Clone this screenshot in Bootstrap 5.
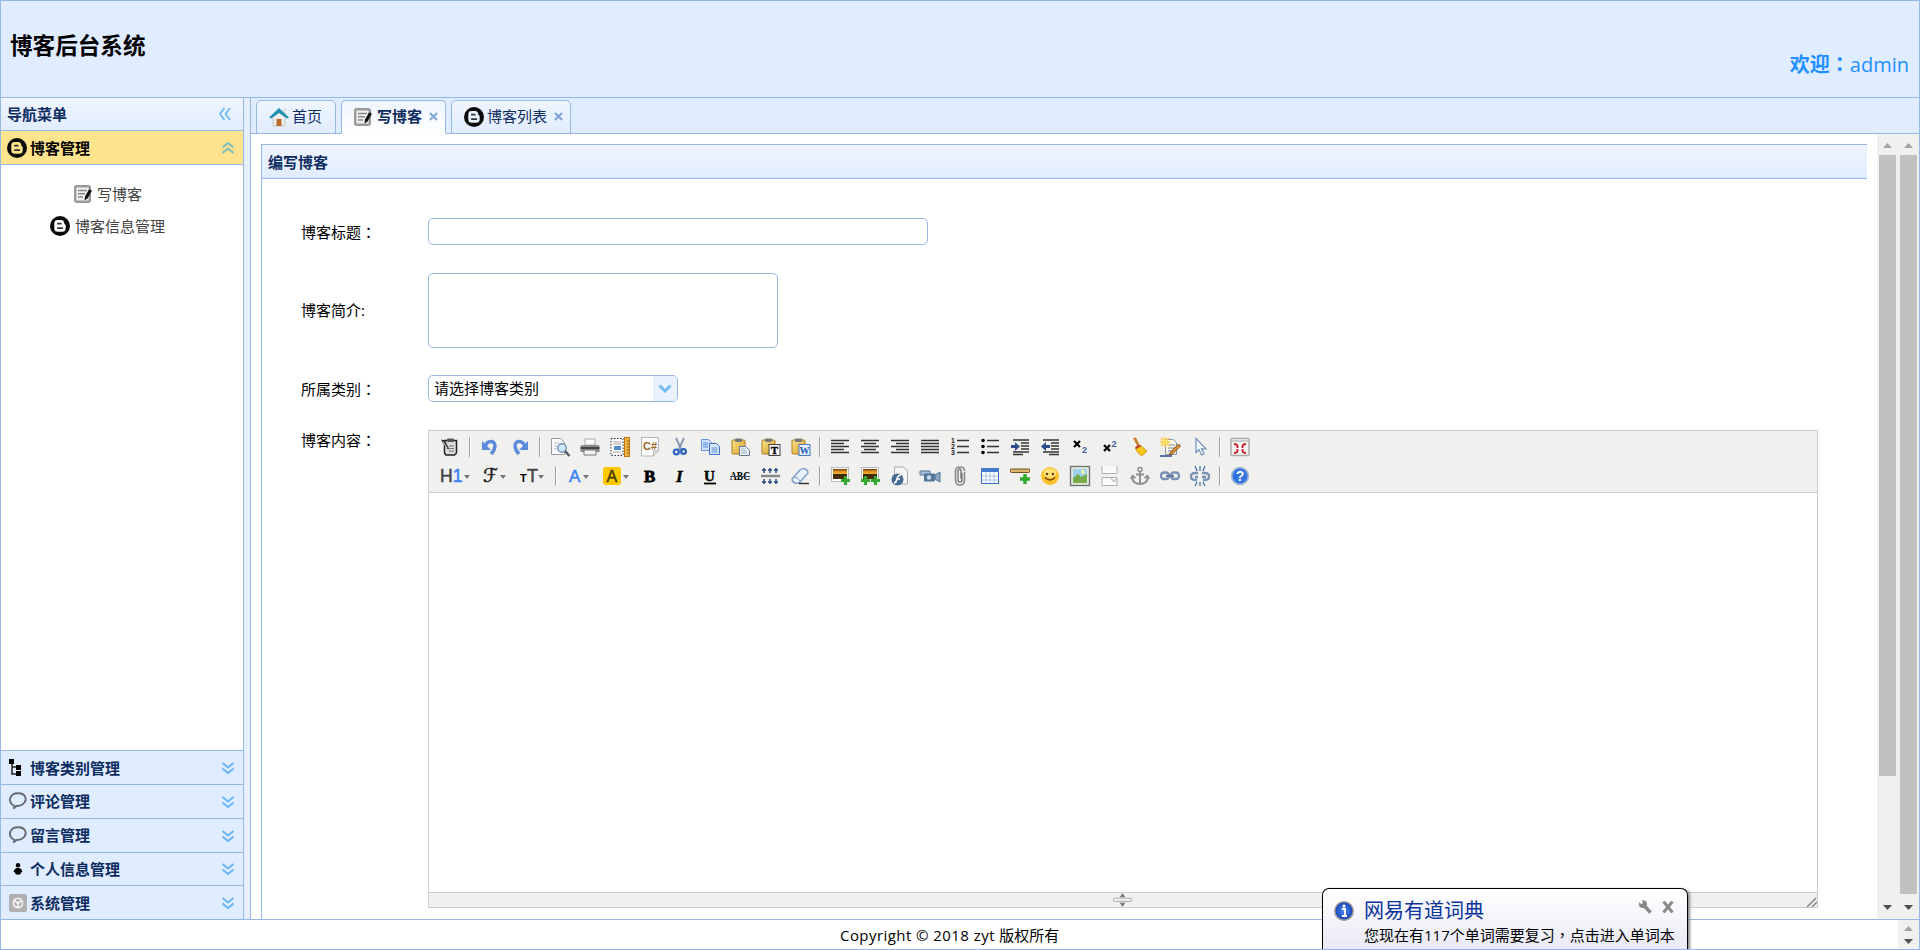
<!DOCTYPE html>
<html lang="zh-CN">
<head>
<meta charset="utf-8">
<title>博客后台系统</title>
<link rel="stylesheet" href="https://cdn.jsdelivr.net/npm/bootstrap@5.3.0/dist/css/bootstrap.min.css">
<style>
:root{--line:#95b8e7;--panel:#e0ecff;--ink:#0e2d5f}
body{height:950px;font:15px/20px "Open Sans","Noto Sans CJK SC",sans-serif;color:#000;border:1px solid var(--line)}
.cjk{font-family:"Noto Sans CJK SC",sans-serif}
.mid{font-family:"Noto Sans CJK TC",sans-serif}
svg{display:block;flex:none}
.top-bar{height:97px;background:var(--panel);border-bottom:1px solid var(--line);padding-left:9px}
.top-bar h1{font:700 22.6px/30px "Noto Sans CJK SC",sans-serif;padding-top:29px}
.welcome{font-size:20px;line-height:26px;color:#1e90ff;padding:50px 10px 0 0}
.main-row{height:821px}
.side{width:243px;border-right:1px solid var(--line)}
.split{width:6px;background:#e6eefb}
.grad{background:linear-gradient(#eff5ff,#e0ecff)}
.side-item{height:34px;border-top:1px solid var(--line);background:var(--panel);color:var(--ink);font-weight:700;padding:0 8px 0 6px}
.side-item .cap{flex:1;margin-left:3px}
.side-item.raise .cap{padding-bottom:2px}
.side-head{height:32px;color:var(--ink);font-weight:700;padding:0 11px 0 6px}
.side-item.on{background:#ffe48d;color:#000;height:35px;border-bottom:1px solid var(--line);border-top:1px solid var(--line)}
.side-links{color:#444;padding-top:13px}
.work{border-left:1px solid var(--line)}
.tab-strip{height:36px;background:var(--panel);border-bottom:1px solid var(--line);padding:2px 0 0 5px;gap:5px}
.tab-one{height:34px;border:1px solid var(--line);border-radius:5px 5px 0 0;color:var(--ink);background:linear-gradient(#eff5ff,#e0ecff);padding-left:12px}
.tab-one span{padding-bottom:2px}
.tab-one.on{background:linear-gradient(#eff5ff,#fff);border-bottom-color:#fff;font-weight:700}
.editor-panel{width:1606px;margin:10px 0 0 10px;border-left:1px solid var(--line);border-top:1px solid var(--line)}
.panel-cap{height:34px;border-bottom:1px solid var(--line);color:var(--ink);font-weight:700;padding-left:6px}
.lab{width:127px;flex:none}
.box{border:1px solid var(--line);border-radius:5px;background:#fff}
.blog-form{padding:39px 0 0 39px}
.rich{width:1390px;height:478px;border:1px solid #ccc}
.tools{height:62px;background:#f0f0ee;border-bottom:1px solid #ccc;padding:1px 0 0 6px}
.tools>div{height:29px;align-items:center}
.tools svg{width:18px;height:18px;margin:0 6px;overflow:visible}
.tools i{width:10px;height:20px;flex:none;display:block;background:linear-gradient(90deg,transparent 4px,#a0a0a0 4px,#a0a0a0 5px,#fff 5px,#fff 6px,transparent 6px)}
.tools svg.w40{width:28px}
.tools svg text{font-family:"Liberation Sans",sans-serif}
.grip{height:15px;background:#f0f0ee;border-top:1px solid #ccc}
.sb{width:21px;background:#f0f0f0}
.sb b{display:block;width:17px;background:#c1c1c1;margin-left:2px}
.foot{height:30px;border-top:1px solid var(--line)}
.latin{letter-spacing:.44px}
.toast-pop{position:absolute;left:1321px;top:887px;width:366px;height:62px;border:1.5px solid #000;border-bottom:0;border-radius:7px 7px 0 0;background:linear-gradient(#fff,#e9e9f5);box-shadow:2px 1px 3px #888;padding:9px 8px 0 11px}
.toast-pop .hd{font-size:20px;line-height:26px;color:#0a3399}
</style>
</head>
<body class="d-flex flex-column overflow-hidden position-relative">
<svg width="0" height="0" class="position-absolute">
<defs>
<linearGradient id="gy" x2="1" y2="1"><stop stop-color="#fbe68a"/><stop offset="1" stop-color="#d49a28"/></linearGradient>
<linearGradient id="gs" x2="0" y2="1"><stop stop-color="#5b3412"/><stop offset=".2" stop-color="#d98a1c"/><stop offset=".5" stop-color="#f8b02c"/><stop offset=".55" stop-color="#3b2408"/><stop offset="1" stop-color="#4b340c"/></linearGradient>
<radialGradient id="gb"><stop stop-color="#4f8bf5"/><stop offset="1" stop-color="#1742b5"/></radialGradient>
<symbol id="blogger" viewBox="0 0 20 20"><circle cx="10" cy="10" r="10" fill="#0a0a0a"/><path d="M4.300 7.500A3.400 3.400 0 0 1 7.700 4.100H11A3.400 3.400 0 0 1 14.300 7.500Q14.300 8.500 15.700 8.700V12.300A3.500 3.500 0 0 1 12.200 15.800H7.800A3.500 3.500 0 0 1 4.300 12.300Z" fill="currentColor"/><path d="M7.800 7.700h3M7.800 12.100h4.600" stroke="#333" stroke-width="1.700" stroke-linecap="round"/></symbol>
<symbol id="note" viewBox="0 0 18 18"><rect x="1.200" y="1.200" width="14.600" height="15.600" rx="1.500" fill="#f0f0f0" stroke="#9a9a9a" stroke-width="2.400"/><path d="M4 5.500h9M4 8.800h7M4 12h5" stroke="#888" stroke-width="1.500"/><path d="M17.500 5l-2.500-.5-4 7-.5 4 3-2 4-7z" fill="#111"/></symbol>
<symbol id="dbl" viewBox="0 0 14 12"><path d="M1.500 1l5.500 4.500L12.500 1M1.500 6.500L7 11l5.500-4.500" fill="none" stroke="currentColor" stroke-width="2.100"/></symbol>
<symbol id="bub" viewBox="0 0 18 18"><path d="M5.500 14C-2 10 .500 1.200 9 1.200S19 9 13 12.700C10.500 14.200 8 14 7.500 14L4.500 16.500Z" fill="none" stroke="#666b75" stroke-width="1.900"/></symbol>
<symbol id="plus" viewBox="0 0 8 8"><path d="M4 0v8M0 4h8" stroke="#35a82f" stroke-width="2.800"/></symbol>
<symbol id="board" viewBox="0 0 18 18"><rect x="1" y="2" width="13" height="14" rx="1" fill="url(#gy)" stroke="#ad7a20"/><rect x="4" y=".5" width="7" height="3.500" rx="1" fill="#777"/></symbol>
<symbol id="pic" viewBox="0 0 18 16"><rect x=".5" y=".5" width="17" height="14" fill="#fff" stroke="#bbb"/><rect x="2" y="2" width="14" height="10" fill="url(#gs)"/></symbol>
<symbol id="up" viewBox="0 0 9 5"><path d="M0 5L4.500 0L9 5Z" fill="currentColor"/></symbol>
</defs></svg>

<header class="top-bar d-flex justify-content-between">
<h1 class="m-0">博客后台系统</h1>
<div class="welcome"><span class="cjk fw-bold">欢迎<span class="mid" lang="zh-TW">：</span></span>admin</div>
</header>

<div class="main-row d-flex">
<aside class="side d-flex flex-column">
<div class="side-head grad d-flex align-items-center justify-content-between"><span>导航菜单</span>
<svg width="14" height="14" viewBox="0 0 14 14"><path d="M6.500 1L2 7l4.500 6M12 1L7.500 7l4.500 6" fill="none" stroke="#74bdf2" stroke-width="1.900"/></svg></div>
<div class="side-item on d-flex align-items-center"><svg width="20" height="20" color="#ffe48d"><use href="#blogger"/></svg><span class="cap">博客管理</span><svg width="14" height="12" color="#7fbcb8" style="transform:scaleY(-1)"><use href="#dbl"/></svg></div>
<div class="side-links flex-grow-1">
<div class="d-flex align-items-center" style="padding:6px 0 6px 73px"><svg width="18" height="18"><use href="#note"/></svg><span style="margin-left:5px">写博客</span></div>
<div class="d-flex align-items-center" style="padding:6px 0 0 49px"><svg width="20" height="20" color="#fff"><use href="#blogger"/></svg><span style="margin-left:5px">博客信息管理</span></div>
</div>
<div class="side-item d-flex align-items-center"><svg width="20" height="20" viewBox="0 0 20 20"><path d="M5 4v12h6M5 9h6" fill="none" stroke="#222" stroke-width="1.500"/><path d="M2 1h5v5H2zM9 7h5v5H9zM9 13h5v5H9z" fill="#000"/></svg><span class="cap">博客类别管理</span><svg width="14" height="12" color="#6db7f3"><use href="#dbl"/></svg></div>
<div class="side-item raise d-flex align-items-center"><svg width="20" height="20" viewBox="-2 0 20 20"><use href="#bub" width="18" height="18"/></svg><span class="cap">评论管理</span><svg width="14" height="12" color="#6db7f3"><use href="#dbl"/></svg></div>
<div class="side-item raise d-flex align-items-center"><svg width="20" height="20" viewBox="-2 0 20 20"><use href="#bub" width="18" height="18"/></svg><span class="cap">留言管理</span><svg width="14" height="12" color="#6db7f3"><use href="#dbl"/></svg></div>
<div class="side-item d-flex align-items-center" style="height:33px"><svg width="20" height="20" viewBox="0 0 20 20"><circle cx="11" cy="6.200" r="2.200"/><path d="M9.500 9h3q2.500 1 3 3.800l-2 1.200v1.500H8.500V14l-2-1.200Q7 10 9.500 9z"/></svg><span class="cap">个人信息管理</span><svg width="14" height="12" color="#6db7f3"><use href="#dbl"/></svg></div>
<div class="side-item d-flex align-items-center"><svg width="20" height="20" viewBox="0 0 20 20"><rect x="2" y="1" width="18" height="18" rx="2" fill="#b0b0b0"/><circle cx="11" cy="10" r="5.500" fill="#ececec"/><circle cx="11" cy="10" r="2.800" fill="none" stroke="#a3a3a3" stroke-width="1.800" stroke-dasharray="3.500 2"/></svg><span class="cap">系统管理</span><svg width="14" height="12" color="#6db7f3"><use href="#dbl"/></svg></div>
</aside>
<div class="split"></div>

<main class="work flex-grow-1 d-flex flex-column">
<div class="tab-strip d-flex">
<div class="tab-one d-flex align-items-center" style="width:80px"><svg width="20" height="20" viewBox="0 0 20 20"><path d="M14 2h3v7h-3z" fill="#e8e8e8" stroke="#ccc" stroke-width=".5"/><path d="M4 10l6-5 6 5v9H4z" fill="#eee" stroke="#c5c5c5"/><path d="M7.500 12h5v7h-5z" fill="#b76a2d"/><path d="M0 10.500L10 1l10 9.500-2 1-8-5.500-8 5.500z" fill="#2292ae"/></svg><span style="margin-left:3px">首页</span></div>
<div class="tab-one on d-flex align-items-center" style="width:105px"><svg width="18" height="18"><use href="#note"/></svg><span style="margin-left:5px">写博客</span><svg width="9" height="9" viewBox="0 0 9 9" style="margin:0 0 2px 7px"><path d="M1 1l7 7M8 1L1 8" stroke="#82a5d8" stroke-width="2"/></svg></div>
<div class="tab-one d-flex align-items-center" style="width:120px"><svg width="20" height="20" color="#e8f1ff"><use href="#blogger"/></svg><span style="margin-left:3px">博客列表</span><svg width="9" height="9" viewBox="0 0 9 9" style="margin:0 0 2px 7px"><path d="M1 1l7 7M8 1L1 8" stroke="#82a5d8" stroke-width="2"/></svg></div>
</div>
<div class="d-flex flex-grow-1 justify-content-between">
<section class="editor-panel d-flex flex-column">
<div class="panel-cap grad d-flex align-items-center">编写博客</div>
<div class="blog-form">
<div class="d-flex align-items-center" style="height:27px"><span class="lab">博客标题<span class="mid" lang="zh-TW">：</span></span><div class="box" style="width:500px;height:27px"></div></div>
<div class="d-flex align-items-center" style="margin-top:28px"><span class="lab" style="padding-bottom:2px">博客简介:</span><div class="box" style="width:350px;height:75px"></div></div>
<div class="d-flex align-items-center" style="margin-top:27px"><span class="lab">所属类别<span class="mid" lang="zh-TW">：</span></span><div class="box d-flex align-items-center justify-content-between overflow-hidden" style="width:250px;height:27px;padding-left:5px"><span style="padding-bottom:2px">请选择博客类别</span><span class="h-100 d-flex align-items-center" style="width:24px;background:#e9f1ff;padding-left:5px"><svg width="14" height="9" viewBox="0 0 14 9"><path d="M1.500 1.500L7 7l5.500-5.500" fill="none" stroke="#72bcf0" stroke-width="3"/></svg></span></div></div>
<div class="d-flex" style="margin-top:28px"><span class="lab">博客内容<span class="mid" lang="zh-TW">：</span></span>
<div class="rich d-flex flex-column">
<div class="tools">
<div class="d-flex">
<svg viewBox="0 0 18 18"><path d="M3.500 2.500h12v12.500l-2 2H5L3.500 15z" fill="#ddd" stroke="#222" stroke-width="1.500"/><rect x="6" y=".5" width="7" height="3.500" rx="1" fill="#555"/><path d="M8 8h5M8 10.500h5M8 13h5" stroke="#777"/><path d="M0 1.500l4 1 4 8-1 1-5-6z" fill="#333"/><path d="M2 4l4 6" stroke="#ddd"/></svg><i></i>
<svg viewBox="0 0 18 18"><path d="M4.500 8C6 2 14 2 14 7.500Q14 12 10 16" fill="none" stroke="#5c8bdc" stroke-width="3.400"/><path d="M1 3v9H10z" fill="#5c8bdc"/></svg>
<svg viewBox="0 0 18 18"><path d="M13.500 8C12 2 4 2 4 7.500Q4 12 8 16" fill="none" stroke="#5c8bdc" stroke-width="3.400"/><path d="M17 3v9H8z" fill="#5c8bdc"/></svg><i></i>
<svg viewBox="0 0 18 18"><path d="M.500.500h9l4 4v12H.500z" fill="#f8fbff" stroke="#999"/><path d="M3 5h5M3 8h4M3 11h3" stroke="#bbb"/><circle cx="11" cy="10" r="4.200" fill="#cfe6fa" stroke="#7b95b5" stroke-width="1.400"/><path d="M14 13l4.500 5" stroke="#55606e" stroke-width="2.600"/></svg>
<svg viewBox="0 0 18 18"><path d="M4 1h10v6H4z" fill="#fff" stroke="#aaa"/><path d="M1 7h16q1.500 0 1.500 2v5h-19V9q0-2 1.500-2z" fill="#8b8b8b"/><path d="M-.5 10h19" stroke="#333" stroke-width="1.600"/><path d="M3 12h12v5H3z" fill="#f4f4f4" stroke="#777"/></svg>
<svg viewBox="0 0 18 18"><rect x="0" y=".5" width="12" height="17" fill="#fff" stroke="#333" stroke-dasharray="1.500 1.500"/><path d="M2 4h8M2 6h8M2 14h8" stroke="#aaa"/><path d="M3 8h7v4H3z" fill="#4e8cce"/><rect x="13.500" y="-.5" width="5" height="19" fill="#f1b53c" stroke="#b87719"/><path d="M16 3h2M16 6h2M16 9h2M16 12h2M16 15h2" stroke="#8a5515"/></svg>
<svg viewBox="0 0 18 18"><path d="M.500-.500h17v13.500l-5 5H.500z" fill="#fbfbfb" stroke="#b5b5b5"/><path d="M12.500 18v-5h5" fill="#ddd" stroke="#b5b5b5"/><text x="2" y="11.500" font-size="10.500" font-weight="700" fill="#9a6528" textLength="14" lengthAdjust="spacingAndGlyphs">C#</text></svg>
<svg viewBox="0 0 18 18"><path d="M5 0l6 13M13 0L7 13" stroke="#8a9bb2" stroke-width="2"/><circle cx="5.300" cy="14" r="2.500" fill="none" stroke="#2c63bc" stroke-width="2.200"/><circle cx="12.500" cy="13.500" r="2.400" fill="none" stroke="#2c63bc" stroke-width="2.200"/></svg>
<svg viewBox="0 0 18 18"><path d="M.500 1.500h7l3 3v8H.500z" fill="#cfe2ff" stroke="#6a94da"/><path d="M8.500 5.500h7l3 3v8h-10z" fill="#d8e8ff" stroke="#3f70c9"/><path d="M10.500 10h6M10.500 12h6M10.500 14h6M2 5h5M2 7h5M2 9h5" stroke="#5f8ede"/></svg>
<svg viewBox="0 0 18 18"><use href="#board" width="18" height="18"/><path d="M8.500 8.500h6l4 4v5h-10z" fill="#eef3fb" stroke="#64748e"/><path d="M10 11h4M10 13h6M10 15h6" stroke="#a3aec0"/></svg>
<svg viewBox="0 0 18 18"><use href="#board" width="18" height="18"/><rect x="8" y="6.500" width="11" height="11" fill="#f6f6f6" stroke="#444"/><text x="10" y="15.800" font-size="10.500" font-weight="700" stroke="#000" stroke-width=".4" style="font-family:'Liberation Serif'">T</text></svg>
<svg viewBox="0 0 18 18"><use href="#board" width="18" height="18"/><rect x="8" y="6.500" width="11" height="11" fill="#e8f1ff" stroke="#4776bc"/><text x="8.500" y="15.500" font-size="10" font-weight="700" fill="#2458b2" style="font-family:'Liberation Serif'">W</text></svg><i></i>
<svg viewBox="0 0 18 18"><path d="M0 2.500h18M0 5.500h13M0 8.500h18M0 11.500h13M0 14.500h18" stroke="#333" stroke-width="1.700"/></svg>
<svg viewBox="0 0 18 18"><path d="M0 2.500h18M3 5.500h12M0 8.500h18M3 11.500h12M0 14.500h18" stroke="#333" stroke-width="1.700"/></svg>
<svg viewBox="0 0 18 18"><path d="M0 2.500h18M5 5.500h13M0 8.500h18M5 11.500h13M0 14.500h18" stroke="#333" stroke-width="1.700"/></svg>
<svg viewBox="0 0 18 18"><path d="M0 2.500h18M0 5.500h18M0 8.500h18M0 11.500h18M0 14.500h18" stroke="#333" stroke-width="1.700"/></svg>
<svg viewBox="0 0 18 18"><path d="M6 2.500h12M6 8.500h12M6 14.500h12" stroke="#333" stroke-width="1.300"/><g font-size="7" font-weight="700" fill="#222"><text x="0" y="5">1</text><text x="0" y="11">2</text><text x="0" y="17">3</text></g></svg>
<svg viewBox="0 0 18 18"><path d="M6 2.500h12M6 8.500h12M6 14.500h12" stroke="#333" stroke-width="1.300"/><circle cx="2" cy="2.500" r="1.800"/><circle cx="2" cy="8.500" r="1.800"/><circle cx="2" cy="14.500" r="1.800"/></svg>
<svg viewBox="0 0 18 18"><path d="M2 2h16M10 5h8M10 8h8M10 11h8M2 14h16M2 16.500h10" stroke="#333" stroke-width="1.500"/><path d="M0 7h4V4l5 4.500L4 13v-3H0z" fill="#2c4f8c"/></svg>
<svg viewBox="0 0 18 18"><path d="M2 2h16M10 5h8M10 8h8M10 11h8M2 14h16M8 16.500h10" stroke="#333" stroke-width="1.500"/><path d="M9 7H5V4L0 8.500 5 13v-3h4z" fill="#2c4f8c"/></svg>
<svg viewBox="0 0 18 18"><path d="M3 3l6 6M9 3L3 9" stroke="#000" stroke-width="2.200"/><text x="11" y="15" font-size="9" font-weight="700" fill="#3b5fa5">2</text></svg>
<svg viewBox="0 0 18 18"><path d="M3 7l6 6M9 7l-6 6" stroke="#000" stroke-width="2.200"/><text x="10.500" y="9" font-size="9" font-weight="700" fill="#3b5fa5">2</text></svg>
<svg viewBox="0 0 18 18"><path d="M2 0l3-.5L9 8l-2 1.500z" fill="#c8832a"/><path d="M4.500 10l5-2.500L16 13l-4.500 4.500Q7 17 4.500 10z" fill="#f3c619" stroke="#d19e12"/><path d="M4.500 10l5-2.500" stroke="#c73b26" stroke-width="2"/></svg>
<svg viewBox="0 0 18 18"><path d="M4.500 1.500h8l3 3v12h-11z" fill="#f9f3e3" stroke="#8697b2"/><path d="M7 7h7M7 10h6M7 13h5" stroke="#7f8ca5"/><path d="M17.500 6l2 2-8 8-3 1 1-3z" fill="#d98f37" stroke="#895017"/><path d="M4-1v10M-1 4h10M0 0l8 8M8 0L0 8" stroke="#ffc93a" stroke-width="1.500"/><circle cx="4" cy="4" r="2.500" fill="#ffe066"/><path d="M-1 18h12" stroke="#23498b" stroke-width="1.500"/></svg>
<svg viewBox="0 0 18 18"><path d="M5 .5v14l3-3 2.500 5.500 2.500-1.200-2.500-5h4.500z" fill="#f5f9ff" stroke="#718fb9" stroke-width="1.200"/></svg><i></i>
<svg viewBox="0 0 18 18"><rect x="0" y=".5" width="18" height="17" rx="1" fill="#f6f6f6" stroke="#aaa" stroke-width="1.500"/><path d="M1 3h16" stroke="#ccc" stroke-width="2"/><path d="M3 6q4 0 3.500 4M15 6q-4 0-3.500 4M3 15q4 0 3.500-4M15 15q-4 0-3.500-4" fill="none" stroke="#c8202f" stroke-width="1.900"/></svg>
</div>
<div class="d-flex">
<svg class="w40" viewBox="0 0 28 18"><text x="-1" y="14.500" font-size="17.500" fill="#444" stroke="#444" stroke-width=".5">H<tspan fill="#3b82f6" stroke="#3b82f6">1</tspan></text><path d="M23 8h6l-3 4z" fill="#777"/></svg>
<svg style="width:25px;margin-left:8px" viewBox="0 0 25 18"><text x="0" y="14.500" font-size="19" stroke="#333" stroke-width=".5" style="font-family:'DejaVu Serif','DejaVu Sans'">ℱ</text><path d="M17 8h6l-3 4z" fill="#777"/></svg>
<svg style="width:25px" viewBox="0 0 25 18"><text x="0" y="15" font-size="11" font-weight="700">T</text><text x="7" y="15" font-size="18" fill="#444" stroke="#444" stroke-width=".5">T</text><path d="M18 8h6l-3 4z" fill="#777"/></svg><i></i>
<svg style="width:22px;margin-left:8px" viewBox="0 0 22 18"><text x="0" y="15" font-size="17" fill="#3b82f6" stroke="#3b82f6" stroke-width=".5">A</text><path d="M14 8h6l-3 4z" fill="#777"/></svg>
<svg style="width:27px;margin-right:5px" viewBox="0 0 27 18"><rect x="0" y="0" width="18" height="18" rx="3" fill="#ffc700"/><text x="3.500" y="14.500" font-size="16" fill="#4b3a00" stroke="#4b3a00" stroke-width=".5">A</text><path d="M20 8h6l-3 4z" fill="#777"/></svg>
<svg viewBox="0 0 18 18"><text x="3" y="14.500" font-size="17" font-weight="700" stroke="#000" stroke-width=".8" style="font-family:'Liberation Serif'">B</text></svg>
<svg viewBox="0 0 18 18"><text x="5" y="14.500" font-size="17" font-weight="700" font-style="italic" stroke="#000" stroke-width=".5" style="font-family:'Liberation Serif'">I</text></svg>
<svg viewBox="0 0 18 18"><text x="3" y="13.500" font-size="15" font-weight="700" stroke="#000" stroke-width=".5" style="font-family:'Liberation Serif'">U</text><path d="M3 16.500h12" stroke="#000" stroke-width="1.800"/></svg>
<svg viewBox="0 0 18 18"><text x="-1" y="13" font-size="11.500" font-weight="700" textLength="20" lengthAdjust="spacingAndGlyphs" style="font-family:'Liberation Serif'">ABC</text><path d="M-1 9.500h20" stroke="#2c4a72"/></svg>
<svg viewBox="0 0 18 18"><path d="M0 9h19" stroke="#888" stroke-width="2.500"/><path d="M3 1v5M9 1v5M15 1v5M3 12v5M9 12v5M15 12v5M1 3h4M7 3h4M13 3h4M1 15h4M7 15h4M13 15h4" stroke="#2d4a7d" stroke-width="1.500"/></svg>
<svg viewBox="0 0 18 18"><path d="M1 12l8-9q2-2 5-1t3 4l-8 9q-2 2-5 1t-3-4z" fill="#e9f1fb" stroke="#7d9dc8" stroke-width="1.400"/><path d="M3 10q4 0 6 4" fill="none" stroke="#7d9dc8"/><path d="M8 16.500h10" stroke="#333" stroke-width="1.400"/></svg><i></i>
<svg viewBox="0 0 18 18"><use href="#pic" width="18" height="16"/><use href="#plus" x="10" y="9" width="9" height="9"/></svg>
<svg viewBox="0 0 18 18"><use href="#pic" width="18" height="16"/><use href="#plus" x="0" y="9" width="9" height="9"/><use href="#plus" x="10" y="9" width="9" height="9"/></svg>
<svg viewBox="0 0 18 18"><path d="M3.500 0h9l4 4v13h-13z" fill="#f7f7f7" stroke="#aaa"/><circle cx="6.500" cy="12.500" r="6" fill="#466a91"/><path d="M10 8q-3 0-4 4t-3 4M5 12h4" fill="none" stroke="#fff" stroke-width="1.600"/></svg>
<svg viewBox="0 0 18 18"><path d="M-1 4h10v4H-1z" fill="#a4bede" stroke="#55769b"/><rect x="3" y="6.500" width="11" height="8" rx="1" fill="#55769b"/><path d="M14 8l5-3v10l-5-3z" fill="#8aa5c6" stroke="#55769b"/><circle cx="8" cy="10.500" r="2.200" fill="#c8daee"/></svg>
<svg viewBox="0 0 18 18"><path d="M11 6v7q0 2-2 2t-2-2V4q0-2 1.500-2T10 4v8" fill="none" stroke="#777" stroke-width="1.400"/><path d="M13.500 5v8q0 5-4.500 5t-4.500-5V4q0-4 4.500-4t4.500 4" fill="none" stroke="#8a8a8a" stroke-width="1.600"/></svg>
<svg viewBox="0 0 18 18"><rect x=".5" y="1.500" width="17" height="15" fill="#fff" stroke="#3a6bc5"/><path d="M0 1h18v4H0z" fill="#4679d1"/><path d="M5 5v11M9 5v11M13 5v11M1 9h16M1 13h16" stroke="#a9c4ee"/></svg>
<svg viewBox="0 0 18 18"><rect x="-.5" y="2" width="19" height="3.500" rx="1" fill="#d8b36b" stroke="#714f21"/><use href="#plus" x="9" y="7" width="10" height="10"/></svg>
<svg viewBox="0 0 18 18"><circle cx="9" cy="9" r="9" fill="#fbc12c"/><ellipse cx="9" cy="6" rx="6.500" ry="4.500" fill="#ffe27a"/><circle cx="6" cy="7" r="1.200" fill="#5a3500"/><circle cx="12" cy="7" r="1.200" fill="#5a3500"/><path d="M4 10.500q5 5 10 0" fill="none" stroke="#7b4300" stroke-width="1.400"/></svg>
<svg viewBox="0 0 18 18"><rect x="-.5" y="-.5" width="19" height="19" fill="#e5eadf" stroke="#6d7275" stroke-width="1.300"/><path d="M2 2h14v14H2z" fill="#9cd2ed"/><path d="M2 11l5-4 3 3 6-3v9H2z" fill="#76aa4b"/><circle cx="12" cy="5" r="2" fill="#f7eea1"/></svg>
<svg viewBox="0 0 18 18"><path d="M1 -1v7.500h15V-1M1 18.500v-8h15v8z" fill="#fafafa" stroke="#b0b0b0"/><path d="M10 11l3 4 2-3" fill="none" stroke="#aaa"/></svg>
<svg viewBox="0 0 18 18"><circle cx="9" cy="2.500" r="2" fill="none" stroke="#909090" stroke-width="1.500"/><path d="M9 4v13M5 7.500h8M1 10q1 7 8 7t8-7M0 12l1.500-3 3 2M18 12l-1.500-3-3 2" fill="none" stroke="#909090" stroke-width="1.900"/></svg>
<svg viewBox="0 0 18 18"><rect x="0" y="5.500" width="8" height="6.500" rx="3" fill="none" stroke="#7891b3" stroke-width="2.300"/><rect x="10" y="5.500" width="8" height="6.500" rx="3" fill="none" stroke="#7891b3" stroke-width="2.300"/><path d="M5 9h8" stroke="#627da3" stroke-width="2"/></svg>
<svg viewBox="0 0 18 18"><path d="M7 6H4Q0 6 0 9.500T4 13h2M11 6h3q4 0 4 3.500T14 13h-2M4 10h3M11 10h4" fill="none" stroke="#7891b3" stroke-width="2.300"/><path d="M9-1v5M4-1l2 5M14-1l-2 5M9 15v4M4 19l2-4M14 19l-2-4" stroke="#4d73a5" stroke-width="1.300"/></svg><i></i>
<svg viewBox="0 0 18 18"><circle cx="9" cy="9" r="8.500" fill="#4a84e3" stroke="#a8b8d2" stroke-width="1.500"/><circle cx="9" cy="9" r="6.800" fill="#3272df"/><text x="4.800" y="14" font-size="14" font-weight="700" fill="#fff">?</text></svg>
</div>
</div>
<div class="flex-grow-1"></div>
<div class="grip d-flex"><svg width="19" height="14" viewBox="0 0 20 14" style="margin-left:684px"><path d="M10 0l3 4H7zM10 14l3-4H7z" fill="#777"/><rect x=".5" y="5" width="19" height="3.500" rx="1" fill="#eee" stroke="#aaa"/></svg><svg class="ms-auto" width="11" height="14" viewBox="0 0 11 14"><path d="M1 14L10 5M6 14l5-5" stroke="#888" stroke-width="1.500"/></svg></div>
</div></div>
</div>
</section>
<div class="d-flex">
<div class="sb"><svg style="margin:9px 0 7px 6px" width="9" height="5" color="#a3a3a3"><use href="#up"/></svg><b style="height:621px"></b><svg style="margin:129px 0 0 6px;transform:scaleY(-1)" width="9" height="5" color="#505050"><use href="#up"/></svg></div>
<div class="sb"><svg style="margin:9px 0 7px 6px" width="9" height="5" color="#a3a3a3"><use href="#up"/></svg><b style="height:739px"></b><svg style="margin:11px 0 0 6px;transform:scaleY(-1)" width="9" height="5" color="#505050"><use href="#up"/></svg></div>
</div>
</div>
</main>
</div>

<footer class="foot d-flex">
<div class="flex-grow-1" style="padding:5px 0 0 839px"><span class="latin">Copyright © 2018 zyt </span>版权所有</div>
<div class="sb"><svg style="margin:6px 0 8px 6px" width="9" height="5" color="#a3a3a3"><use href="#up"/></svg><svg style="margin-left:6px;transform:scaleY(-1)" width="9" height="5" color="#505050"><use href="#up"/></svg></div>
</footer>

<div class="toast-pop d-flex">
<svg width="20" height="20" viewBox="0 0 20 20" style="margin-top:3px"><circle cx="10" cy="10" r="9.200" fill="url(#gb)" stroke="#999" stroke-width="1.500"/><path d="M8 8h3v7M8 15h5" fill="none" stroke="#fff" stroke-width="2"/><circle cx="10" cy="5" r="1.500" fill="#fff"/></svg>
<div class="flex-grow-1" style="margin-left:10px"><div class="hd d-flex"><span>网易有道词典</span>
<svg class="ms-auto" width="14" height="14" viewBox="0 0 14 14" style="margin-top:2px"><path d="M6 5.500l6.500 7" stroke="#8a8a8a" stroke-width="3.500"/><path d="M1 2l2 2 2-1-1-3q5 0 5 4 0 4-4 4Q0 8 1 2z" fill="#8a8a8a"/></svg>
<svg width="12" height="12" viewBox="0 0 12 12" style="margin:3px 5px 0 10px"><path d="M1.500.500l9 11M10.500.500l-9 11" stroke="#8a8a8a" stroke-width="3"/></svg></div>
<div class="text-nowrap" style="margin-top:1px">您现在有117个单词需要复习<span class="mid" lang="zh-TW">，</span>点击进入单词本</div></div>
</div>
<script src="https://cdn.jsdelivr.net/npm/bootstrap@5.3.0/dist/js/bootstrap.bundle.min.js"></script>
</body>
</html>
